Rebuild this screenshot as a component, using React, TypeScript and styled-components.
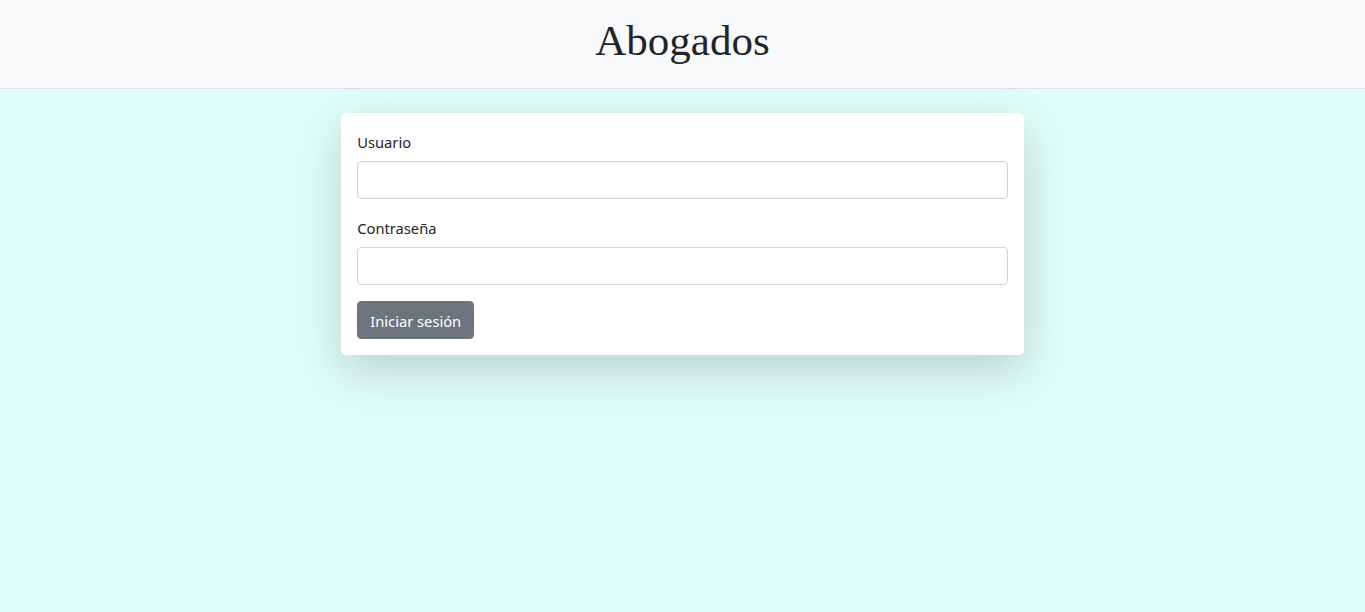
import React from "react";
import styled, { createGlobalStyle } from "styled-components";

const Global = createGlobalStyle`
  html, body { margin: 0; padding: 0; }
  body {
    background: #e0fdfa;
    font-family: "Noto Sans", "Open Sans", sans-serif;
    color: #212529;
    font-size: 16px;
    line-height: 1.5;
    min-height: 100vh;
  }
  * { box-sizing: border-box; }
`;

const Page = styled.div`
  min-height: 100vh;
  display: flex;
  flex-direction: column;
`;

const Header = styled.header`
  height: 89px;
  background: #f8f9fa;
  border-bottom: 1px solid #dee2e6;
  display: flex;
  align-items: center;
  justify-content: center;
`;

const Title = styled.h1`
  margin: 0;
  font-family: "Liberation Serif", "DejaVu Serif", serif;
  font-weight: 400;
  font-size: 43px;
  line-height: 1.2;
  color: #212529;
  padding-bottom: 6px;
`;

const Main = styled.main`
  flex: 1;
  display: flex;
  align-items: flex-start;
  justify-content: center;
  padding-top: 24px;
`;

const Card = styled.form`
  width: 50%;
  background: #fff;
  border-radius: 5px;
  padding: 16px;
  box-shadow: 0 16px 48px rgba(0, 0, 0, 0.175);
`;

const Group = styled.div`
  margin-bottom: 16px;
`;

const Label = styled.label`
  display: block;
  margin-bottom: 8px;
  font-size: 14.7px;
  line-height: 24px;
  padding-top: 1px;
  height: 24px;
`;

const Input = styled.input`
  display: block;
  width: 100%;
  height: 38px;
  border: 1px solid #ced4da;
  border-radius: 4px;
  padding: 6px 12px;
  font-size: 16px;
  background: #fff;
`;

const Button = styled.button`
  height: 38px;
  padding: 0 12px;
  background: #6c757d;
  color: #fff;
  border: 1px solid #6c757d;
  border-radius: 4px;
  font-family: "Noto Sans", "Open Sans", sans-serif;
  font-size: 14.7px;
  line-height: 24px;
  padding-top: 1px;
`;

export default function App() {
  return (
    <Page>
      <Global />
      <Header>
        <Title>Abogados</Title>
      </Header>
      <Main>
        <Card onSubmit={(e) => e.preventDefault()}>
          <Group>
            <Label>Usuario</Label>
            <Input type="text" />
          </Group>
          <Group>
            <Label>Contraseña</Label>
            <Input type="password" />
          </Group>
          <Button type="submit">Iniciar sesión</Button>
        </Card>
      </Main>
    </Page>
  );
}
